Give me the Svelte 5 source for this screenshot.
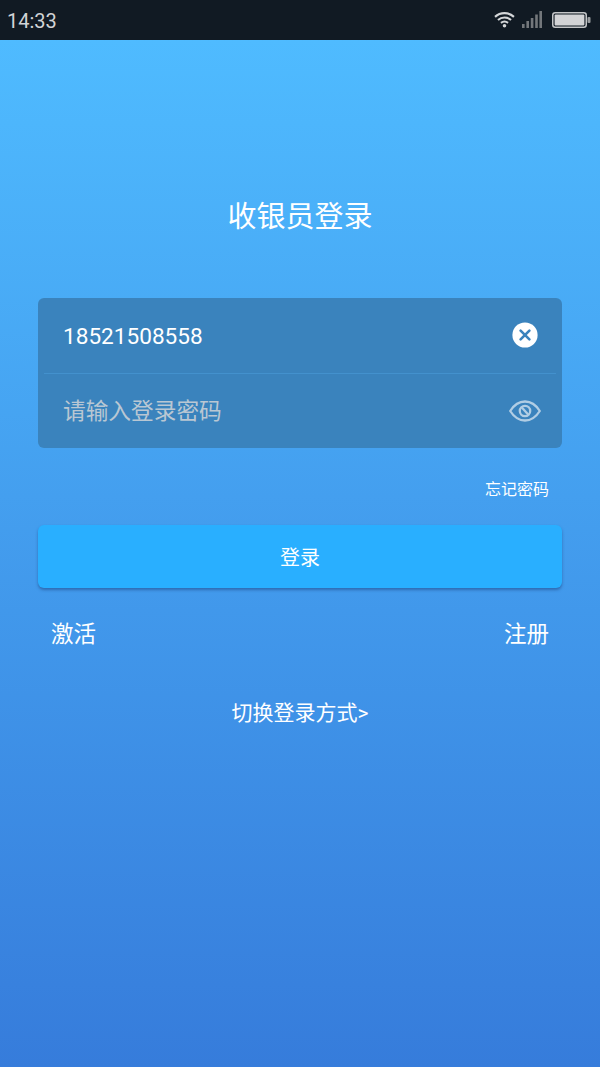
<script>
  let phone = '18521508558';
</script>

<div class="screen">
  <div class="statusbar">
    <span class="time">14:33</span>
    <div class="status-icons">
      <svg class="wifi" width="21" height="17" viewBox="0 0 20 16">
        <path d="M1 5.5C6 .8 14 .8 19 5.5" fill="none" stroke="#d4d6d8" stroke-width="2"/>
        <path d="M3.8 8.4C7.3 5.3 12.7 5.3 16.2 8.4" fill="none" stroke="#d4d6d8" stroke-width="2"/>
        <path d="M6.6 11.2C8.6 9.7 11.4 9.7 13.4 11.2" fill="none" stroke="#d4d6d8" stroke-width="2"/>
        <circle cx="10" cy="14" r="1.7" fill="#d4d6d8"/>
      </svg>
      <svg class="signal" width="20" height="18" viewBox="0 0 20 18">
        <rect x="0" y="13" width="2.6" height="4" fill="#73777b"/>
        <rect x="4.4" y="10" width="2.6" height="7" fill="#73777b"/>
        <rect x="8.8" y="7" width="2.6" height="10" fill="#73777b"/>
        <rect x="13.2" y="3.5" width="2.6" height="13.5" fill="#73777b"/>
        <rect x="17.4" y="0" width="2.6" height="17" fill="#73777b"/>
      </svg>
      <svg class="battery" width="39" height="16" viewBox="0 0 39 16">
        <rect x="0.75" y="0.75" width="33.5" height="14.5" rx="2.5" fill="none" stroke="#c4c6c8" stroke-width="1.5"/>
        <rect x="2.6" y="2.6" width="29.8" height="10.8" rx="1" fill="#d2d3d5"/>
        <rect x="35.5" y="5" width="3" height="6" rx="1" fill="#9a9da0"/>
      </svg>
    </div>
  </div>

  <main>
    <h1>收银员登录</h1>

    <div class="form-card">
      <div class="field">
        <span class="value">{phone}</span>
        <svg class="clear" width="26" height="26" viewBox="0 0 26 26">
          <circle cx="13" cy="13" r="12.6" fill="#fff"/>
          <path d="M8.6 8.6L17.4 17.4M17.4 8.6L8.6 17.4" stroke="#3a83bd" stroke-width="2.6" stroke-linecap="round"/>
        </svg>
      </div>
      <div class="divider"></div>
      <div class="field">
        <span class="placeholder">请输入登录密码</span>
        <svg class="eye" width="32" height="22" viewBox="0 0 32 22">
          <path d="M1.2 11C5 5 10 1.5 16 1.5S27 5 30.8 11C27 17 22 20.5 16 20.5S5 17 1.2 11Z" fill="none" stroke="#b0cde4" stroke-width="2.3" stroke-linejoin="round"/>
          <circle cx="16" cy="11" r="5.2" fill="none" stroke="#b0cde4" stroke-width="2.3"/>
          <path d="M12.4 7L19.6 15" stroke="#b0cde4" stroke-width="2.3"/>
        </svg>
      </div>
    </div>

    <div class="forgot"><span>忘记密码</span></div>

    <button class="login">登录</button>

    <div class="links">
      <span>激活</span>
      <span>注册</span>
    </div>

    <div class="switch">切换登录方式&gt;</div>
  </main>
</div>

<style>
  :global(body) {
    margin: 0;
    font-family: Roboto, "Noto Sans CJK SC", sans-serif;
  }

  .screen {
    width: 600px;
    height: 1067px;
    display: flex;
    flex-direction: column;
    overflow: hidden;
  }

  .statusbar {
    height: 40px;
    flex: none;
    background: #111a23;
    color: #d2d4d6;
    display: flex;
    align-items: center;
    justify-content: space-between;
    padding: 0 9px 0 7px;
    box-sizing: border-box;
  }

  .time {
    font-size: 20px;
    margin-top: 2px;
  }

  .status-icons {
    display: flex;
    align-items: center;
    gap: 7px;
    margin-top: -1px;
  }

  .signal {
    margin-right: 3px;
  }

  main {
    flex: 1;
    background: linear-gradient(180deg, #4fbbff 0%, #367cdb 100%);
    padding: 0 38px;
    display: flex;
    flex-direction: column;
    color: #fff;
  }

  h1 {
    margin: 156px 0 0;
    height: 42px;
    line-height: 42px;
    font-size: 29px;
    font-weight: 400;
    text-align: center;
  }

  .form-card {
    margin-top: 60px;
    height: 150px;
    border-radius: 6px;
    background: #3a83bd;
    display: flex;
    flex-direction: column;
    padding: 0 6px;
  }

  .field {
    flex: 1;
    display: flex;
    align-items: center;
    justify-content: space-between;
    padding: 0 19px;
  }

  .field:last-child {
    padding-right: 15px;
  }

  .value {
    font-size: 22.6px;
    margin-top: 2px;
  }

  .placeholder {
    font-size: 22.7px;
    color: #b9c7d3;
    margin-bottom: 2px;
  }

  .clear {
    margin-right: -1px;
  }

  .divider {
    height: 1px;
    background: #4391cd;
  }

  .forgot {
    display: flex;
    justify-content: flex-end;
    padding-right: 13px;
    margin-top: 32px;
    font-size: 16px;
    line-height: 20px;
  }

  .login {
    margin-top: 25px;
    height: 63px;
    border: 0;
    border-radius: 6px;
    background: #29afff;
    color: #fff;
    font-family: inherit;
    font-size: 20px;
    box-shadow: 0 2px 3px rgba(30, 70, 130, 0.55);
  }

  .links {
    display: flex;
    justify-content: space-between;
    padding: 0 13px;
    margin-top: 31px;
    font-size: 22.5px;
    line-height: 30px;
  }

  .switch {
    margin-top: 49px;
    text-align: center;
    font-size: 21px;
    line-height: 30px;
  }
</style>
